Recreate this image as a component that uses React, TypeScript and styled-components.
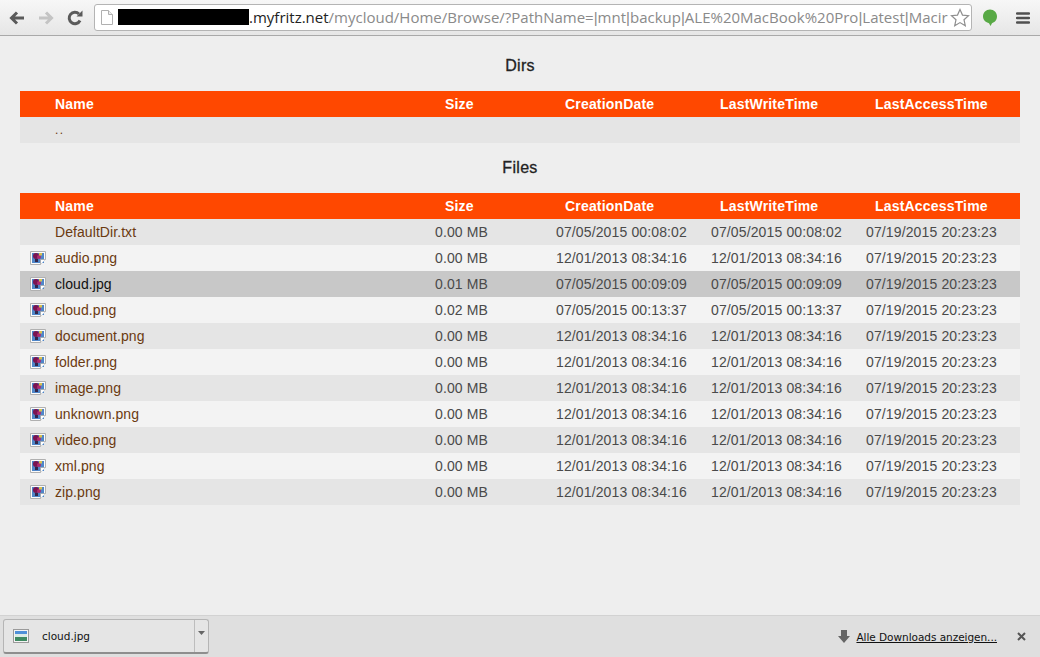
import React from "react";
import styled, { createGlobalStyle } from "styled-components";

const Global = createGlobalStyle`
  html, body { margin: 0; padding: 0; height: 100%; background: #eeeeee; overflow: hidden; }
  #root { height: 100%; }
`;

const Page = styled.div`
  width: 1040px; height: 657px; display: flex; flex-direction: column;
  font-family: "Liberation Sans", Arial, sans-serif; background: #eeeeee;
`;

const Toolbar = styled.header`
  height: 35px; flex: none; display: flex; align-items: center; padding: 0 7px 0 8px;
  background: linear-gradient(#f7f7f7, #e6e6e6); border-bottom: 1px solid #a9a9a9;
`;
const NavIcon = styled.svg<{ $gap?: number }>`
  width: 18px; height: 18px; flex: none; margin-right: ${p => p.$gap ?? 11}px;
`;
const Omnibox = styled.div`
  width: 878px; height: 27px; box-sizing: border-box; flex: none; display: flex; align-items: center;
  margin-top: -1px; padding: 0 1px 0 6px; background: #fff; border: 1px solid #b4b4b4; border-radius: 3px;
  font-family: "Open Sans", sans-serif; font-size: 15px; color: #8a8a8a; overflow: hidden; white-space: nowrap;
`;
const PageGlyph = styled.svg` width: 12px; height: 15px; flex: none; `;
const Redacted = styled.span`
  width: 131px; height: 16px; background: #000; flex: none; margin-left: 5px;
`;
const Host = styled.span` color: #222; `;
const UrlText = styled.span` flex: 1; overflow: hidden; `;
const Pipe = styled.span` font-family: "Liberation Sans", sans-serif; `;
const StarIcon = styled.svg` width: 20px; height: 19px; flex: none; `;
const BubbleIcon = styled.svg` width: 16px; height: 18px; flex: none; margin-left: 10px; `;
const MenuIcon = styled.svg` width: 14px; height: 14px; flex: none; margin-left: 18px; `;

const Content = styled.main`
  flex: 1; padding: 0 20px; display: flex; flex-direction: column;
`;
const Title = styled.h2`
  margin: 0; height: 50px; display: flex; align-items: center; justify-content: center; box-sizing: border-box;
  font-size: 16px; font-weight: 400; letter-spacing: 0.3px; color: #222; -webkit-text-stroke: 0.3px #222;
`;
const DirsTitle = styled(Title)` height: 55px; padding-top: 5px; `;
const Table = styled.section` display: flex; flex-direction: column; `;

const HEAD = "35px 390px 120px 155px 155px 1fr";
const BODY = "35px 380px 121px 155px 155px 1fr";

const HeadRow = styled.div`
  display: grid; grid-template-columns: ${HEAD}; height: 26px; align-items: center;
  background: #ff4800; color: #fff; font-size: 14px; font-weight: 700; letter-spacing: 0.18px;
`;
const Row = styled.div<{ $tone: "odd" | "even" | "sel" }>`
  display: grid; grid-template-columns: ${BODY}; height: 26px; align-items: center;
  font-size: 14px; letter-spacing: 0.07px; color: ${p => (p.$tone === "sel" ? "#111" : "#6b3a10")};
  background: ${p => (p.$tone === "sel" ? "#c8c8c8" : p.$tone === "odd" ? "#e5e5e5" : "#f3f3f3")};
`;
const NumCell = styled.span` color: #4a4a4a; font-size: 14px; letter-spacing: 0.13px; `;
const DotCell = styled.span` letter-spacing: 1.5px; font-size: 12px; `;
const IconCell = styled.span` display: flex; padding-left: 10px; `;
const FileThumb = styled.svg` width: 16px; height: 14px; display: block; `;

const Shelf = styled.footer`
  height: 41px; flex: none; display: flex; align-items: center; background: #dfdfdf; border-top: 1px solid #d2d2d2;
  font-family: "DejaVu Sans", sans-serif; font-size: 10.5px; color: #111; padding: 0 14px 0 3px;
`;
const DownloadChip = styled.div`
  width: 206px; height: 35px; box-sizing: border-box; display: flex; align-items: center;
  border: 1px solid #b5b5b5; border-bottom: 2px solid #8e8e8e; border-radius: 3px; background: #e5e5e5;
`;
const ChipMain = styled.div`
  flex: 1; display: flex; align-items: center; gap: 13px; padding-left: 9px; height: 100%;
  border-right: 1px solid #bdbdbd;
`;
const ChipArrow = styled.div`
  width: 13px; height: 100%; display: flex; justify-content: center; padding-top: 11px; box-sizing: border-box;
`;
const Spacer = styled.div` flex: 1; `;
const AllLink = styled.a` color: #111; text-decoration: underline; margin-left: 6px; letter-spacing: -0.04px; `;
const CloseBtn = styled.svg` width: 9px; height: 9px; margin-left: 20px; `;

const files: [string, string, string, string, string][] = [
  ["audio.png", "0.00 MB", "12/01/2013 08:34:16", "12/01/2013 08:34:16", "07/19/2015 20:23:23"],
  ["cloud.jpg", "0.01 MB", "07/05/2015 00:09:09", "07/05/2015 00:09:09", "07/19/2015 20:23:23"],
  ["cloud.png", "0.02 MB", "07/05/2015 00:13:37", "07/05/2015 00:13:37", "07/19/2015 20:23:23"],
  ["document.png", "0.00 MB", "12/01/2013 08:34:16", "12/01/2013 08:34:16", "07/19/2015 20:23:23"],
  ["folder.png", "0.00 MB", "12/01/2013 08:34:16", "12/01/2013 08:34:16", "07/19/2015 20:23:23"],
  ["image.png", "0.00 MB", "12/01/2013 08:34:16", "12/01/2013 08:34:16", "07/19/2015 20:23:23"],
  ["unknown.png", "0.00 MB", "12/01/2013 08:34:16", "12/01/2013 08:34:16", "07/19/2015 20:23:23"],
  ["video.png", "0.00 MB", "12/01/2013 08:34:16", "12/01/2013 08:34:16", "07/19/2015 20:23:23"],
  ["xml.png", "0.00 MB", "12/01/2013 08:34:16", "12/01/2013 08:34:16", "07/19/2015 20:23:23"],
  ["zip.png", "0.00 MB", "12/01/2013 08:34:16", "12/01/2013 08:34:16", "07/19/2015 20:23:23"],
];

const Head = () => (
  <HeadRow>
    <span />
    <span>Name</span>
    <span>Size</span>
    <span>CreationDate</span>
    <span>LastWriteTime</span>
    <span>LastAccessTime</span>
  </HeadRow>
);

const Thumb = () => (
  <FileThumb viewBox="0 0 16 14">
    <path d="M.5.5h15v8l-5 5H.5z" fill="#fbfbfb" stroke="#b0b0b0" />
    <rect x="2" y="2" width="12" height="10" fill="#4f86c8" />
    <circle cx="6" cy="5" r="3" fill="#7a1450" />
    <circle cx="9" cy="6" r="2" fill="#b02a70" />
    <rect x="5" y="8" width="3" height="3" fill="#33264a" />
    <rect x="9" y="2" width="3" height="2.5" fill="#d8c050" />
    <path d="M10.500 13.500v-5h5z" fill="#fff" />
    <path d="M10.500 13.500v-5h5" fill="none" stroke="#a0a0a0" strokeWidth=".7" />
  </FileThumb>
);

const url = "/mycloud/Home/Browse/?PathName=|mnt|backup|ALE%20MacBook%20Pro|Latest|Macir".split("|");

export default function App() {
  return (
    <Page>
      <Global />
      <Toolbar>
        <NavIcon viewBox="0 0 18 18">
          <path d="M16 9H5M9 3.5 3.5 9 9 14.5" fill="none" stroke="#5a5a5a" strokeWidth="3" />
        </NavIcon>
        <NavIcon viewBox="0 0 18 18">
          <path d="M2 9h11M9 3.5 14.500 9 9 14.500" fill="none" stroke="#c4c4c4" strokeWidth="3" />
        </NavIcon>
        <NavIcon viewBox="0 0 18 18" $gap={10}>
          <path d="M14 11.500A5.700 5.700 0 1 1 13 5" fill="none" stroke="#5a5a5a" strokeWidth="3" />
          <path d="M10.500 7.500h6v-6z" fill="#5a5a5a" />
        </NavIcon>
        <Omnibox>
          <PageGlyph viewBox="0 0 12 15">
            <path d="M.5.500h7l4 4v10H.5z" fill="#fff" stroke="#b0b0b0" />
            <path d="M7.500.500v4h4" fill="#eee" stroke="#b0b0b0" />
          </PageGlyph>
          <Redacted />
          <UrlText>
            <Host>.myfritz.net</Host>
            {url.map((part, i) => (
              <React.Fragment key={i}>
                {i > 0 && <Pipe>|</Pipe>}
                {part}
              </React.Fragment>
            ))}
          </UrlText>
          <StarIcon viewBox="0 0 20 19">
            <path d="M10 1.500l2.500 5.600 6 .6-4.500 4 1.300 6L10 14.600l-5.300 3.100 1.300-6-4.500-4 6-.6z" fill="#fff" stroke="#8f8f8f" strokeWidth="1.200" />
          </StarIcon>
        </Omnibox>
        <BubbleIcon viewBox="0 0 16 18">
          <path d="M8 .5c4 0 7 3 7 7 0 3.500-2.500 6-5 6.700l-1.500 2.800-1.500-2.800C4 13.500 1 11 1 7.500c0-4 3-7 7-7z" fill="#58a945" />
        </BubbleIcon>
        <MenuIcon viewBox="0 0 14 14">
          <path d="M1 2.500h12M1 7h12M1 11.500h12" stroke="#505050" strokeWidth="2.400" strokeLinecap="round" />
        </MenuIcon>
      </Toolbar>
      <Content>
        <DirsTitle>Dirs</DirsTitle>
        <Table>
          <Head />
          <Row $tone="odd"><span /><DotCell>..</DotCell></Row>
        </Table>
        <Title>Files</Title>
        <Table>
          <Head />
          <Row $tone="odd">
            <span /><span>DefaultDir.txt</span>
            <NumCell>0.00 MB</NumCell>
            <NumCell>07/05/2015 00:08:02</NumCell>
            <NumCell>07/05/2015 00:08:02</NumCell>
            <NumCell>07/19/2015 20:23:23</NumCell>
          </Row>
          {files.map((f, i) => (
            <Row key={i} $tone={i === 1 ? "sel" : i % 2 ? "odd" : "even"}>
              <IconCell><Thumb /></IconCell>
              <span>{f[0]}</span>
              {f.slice(1).map((v, j) => <NumCell key={j}>{v}</NumCell>)}
            </Row>
          ))}
        </Table>
      </Content>
      <Shelf>
        <DownloadChip>
          <ChipMain>
            <svg width="16" height="14" viewBox="0 0 16 14">
              <rect x=".5" y=".5" width="15" height="13" fill="#f4f4f4" stroke="#9a9a9a" />
              <rect x="2" y="2" width="12" height="4" fill="#4f90d8" />
              <rect x="2" y="5" width="12" height="3" fill="#dcebe6" />
              <rect x="2" y="8" width="12" height="4" fill="#3f8a62" />
            </svg>
            <span>cloud.jpg</span>
          </ChipMain>
          <ChipArrow>
            <svg width="7" height="4" viewBox="0 0 7 4"><path d="M0 0h7L3.500 4z" fill="#666" /></svg>
          </ChipArrow>
        </DownloadChip>
        <Spacer />
        <svg width="12" height="13" viewBox="0 0 12 13">
          <path d="M3 0h6v6h3l-6 7-6-7h3z" fill="#666" />
        </svg>
        <AllLink>Alle Downloads anzeigen...</AllLink>
        <CloseBtn viewBox="0 0 9 9">
          <path d="M1 1l7 7M8 1 1 8" stroke="#555" strokeWidth="2" />
        </CloseBtn>
      </Shelf>
    </Page>
  );
}
